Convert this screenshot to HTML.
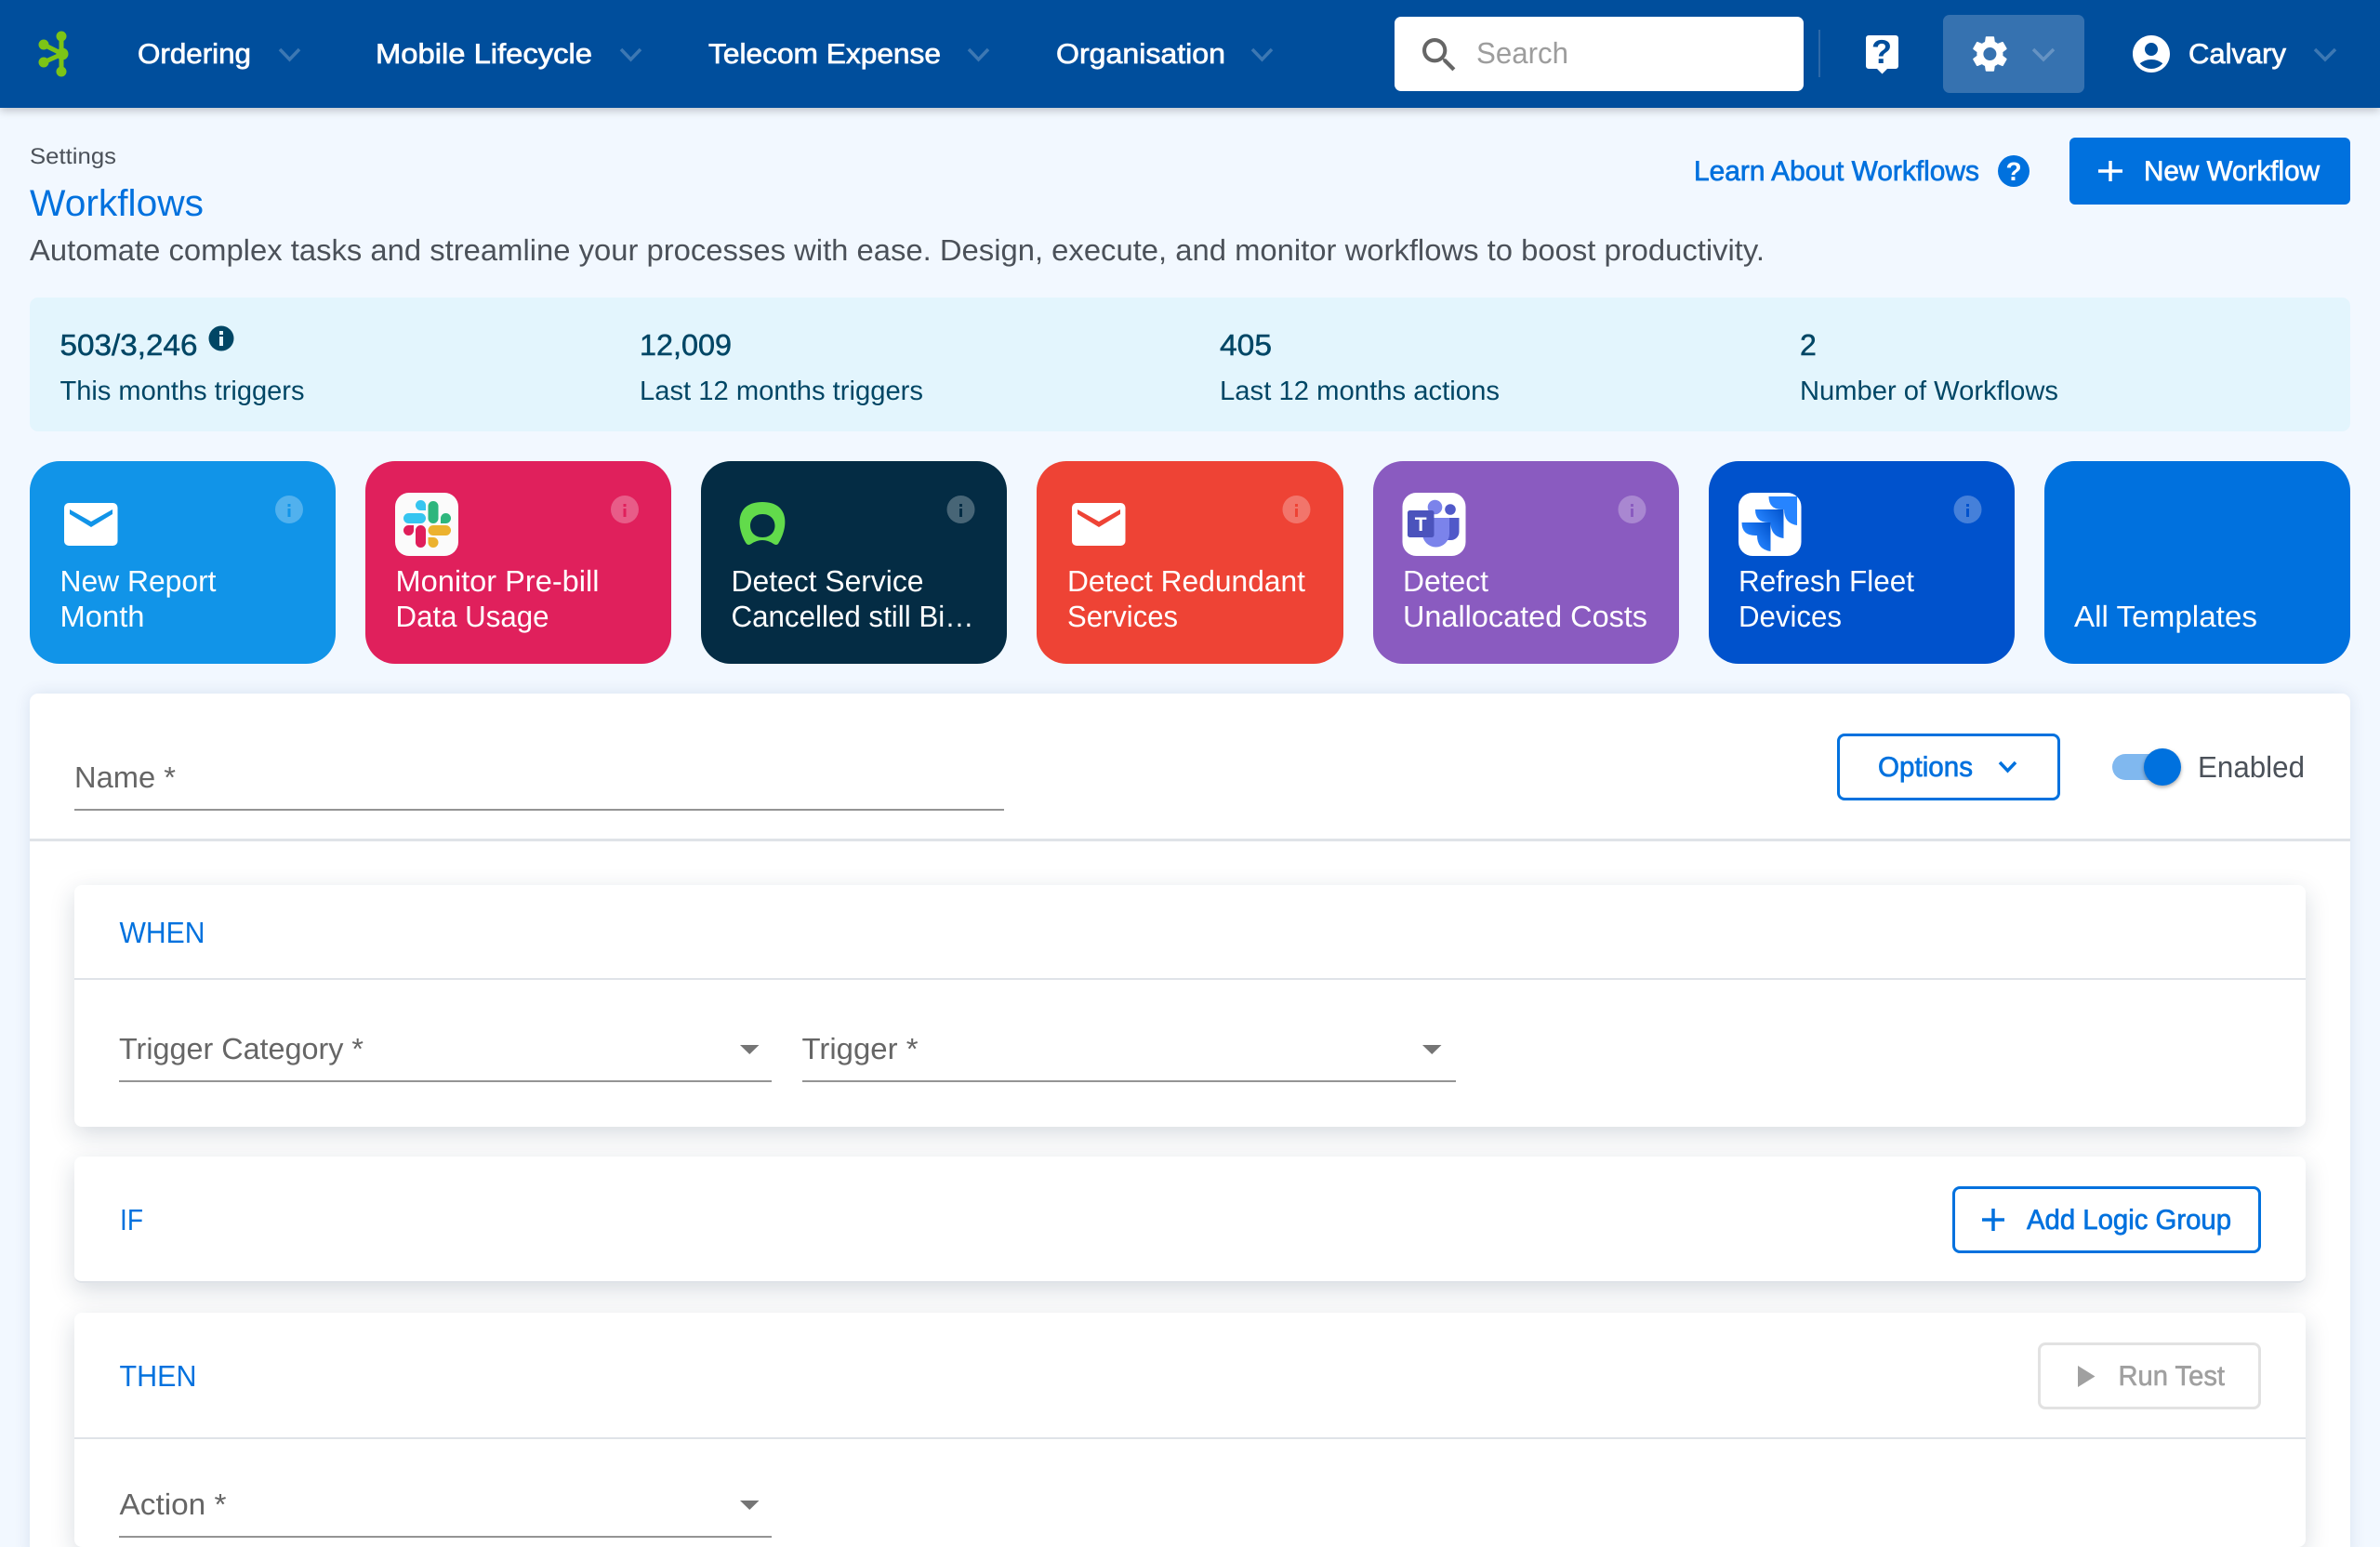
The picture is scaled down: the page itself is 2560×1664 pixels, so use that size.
<!DOCTYPE html>
<html lang="en">
<head>
<meta charset="utf-8">
<title>Workflows</title>
<style>
html,body{margin:0;padding:0;width:2560px;height:1664px;overflow:hidden;background:#f2f8ff;font-family:"Liberation Sans",sans-serif}
#page{position:relative;width:2560px;height:1664px;overflow:hidden}
.b{position:absolute;box-sizing:border-box}
header.b{left:0;top:0;width:2560px;height:116px;background:#004e9c;box-shadow:0 3px 9px rgba(0,0,0,.22)}
.search{left:1500px;top:18px;width:440px;height:80px;background:#fff;border-radius:7px}
.sep{left:1956px;top:32px;width:2px;height:51px;background:#2d69a8}
.gearbox{left:2090px;top:16px;width:152px;height:84px;background:#3672b0;border-radius:7px}
.newbtn{left:2226px;top:148px;width:302px;height:72px;background:#0071de;border-radius:6px}
.stats{left:32px;top:320px;width:2496px;height:144px;background:#e3f5fd;border-radius:9px}
.card{top:496px;width:329.140px;height:218px;border-radius:32px}
.panel{left:32px;top:746px;width:2496px;height:930px;background:#fff;border-radius:9px 9px 0 0;box-shadow:0 0 18px rgba(0,50,120,.11)}
.line{background:#dfe3e8;height:3px}
.ul{background:#949494;height:2px}
.sub{left:80px;width:2400px;background:#fff;border-radius:8px;box-shadow:0 8px 26px rgba(20,40,70,.17)}
.obtn{border:3px solid #0071de;border-radius:8px;background:#fff}
.dbtn{border:3px solid #e2e2e2;border-radius:8px;background:#fff}
.track{left:2272px;top:811px;width:60px;height:28px;background:#80b8ef;border-radius:14px}
.thumb{left:2306px;top:805px;width:40px;height:40px;background:#0071de;border-radius:50%;box-shadow:0 2px 4px rgba(0,0,0,.35)}
svg#o{position:absolute;left:0;top:0;width:2560px;height:1664px;overflow:hidden}
text{font-family:"Liberation Sans",sans-serif;text-rendering:geometricPrecision}
.nav{font-size:30px;fill:#fff;stroke:#fff;stroke-width:.7}
.bl{font-size:30px;fill:#0071de;stroke:#0071de;stroke-width:.7}
.g{fill:#4b5159}
.st{font-size:32px;fill:#004665;stroke:#004665;stroke-width:.5}
.sl{font-size:29px;fill:#004665}
.ct{font-size:32px;fill:#fff}
.sec{font-size:32px;fill:#0071de}
.lab{font-size:32px;fill:#666}
</style>
</head>
<body>
<div id="page">
<header class="b"></header>
<div class="b search"></div>
<div class="b sep"></div>
<div class="b gearbox"></div>
<div class="b newbtn"></div>
<div class="b stats"></div>

<div class="b card" style="left:32px;background:#1194e8"></div>
<div class="b card" style="left:393.140px;background:#e0205c"></div>
<div class="b card" style="left:754.290px;background:#042c44"></div>
<div class="b card" style="left:1115.430px;background:#ee4335"></div>
<div class="b card" style="left:1476.570px;background:#8a5bc0"></div>
<div class="b card" style="left:1837.710px;background:#0052cc"></div>
<div class="b card" style="left:2198.860px;background:#0071de"></div>

<div class="b panel"></div>
<div class="b ul" style="left:80px;top:870px;width:1000px"></div>
<div class="b line" style="left:32px;top:902px;width:2496px"></div>
<div class="b obtn" style="left:1976px;top:789px;width:240px;height:72px"></div>
<div class="b track"></div>
<div class="b thumb"></div>

<div class="b sub" style="top:952px;height:259.500px"></div>
<div class="b line" style="left:80px;top:1052px;width:2400px;height:2px"></div>
<div class="b ul" style="left:128px;top:1162px;width:702px"></div>
<div class="b ul" style="left:862.500px;top:1162px;width:703px"></div>

<div class="b sub" style="top:1244px;height:135.500px;border-bottom:2px solid #dfe3e8"></div>
<div class="b obtn" style="left:2100px;top:1276px;width:332px;height:72px"></div>

<div class="b sub" style="top:1412px;height:252px"></div>
<div class="b line" style="left:80px;top:1546px;width:2400px;height:2px"></div>
<div class="b dbtn" style="left:2192px;top:1444px;width:240px;height:72px"></div>
<div class="b ul" style="left:128px;top:1652px;width:702px"></div>

<svg id="o" xmlns="http://www.w3.org/2000/svg" viewBox="0 0 2560 1664">
<defs>
<linearGradient id="jg" x1="1" y1="0" x2="0.3" y2="0.6"><stop offset="0" stop-color="#0052cc"/><stop offset="1" stop-color="#2684ff"/></linearGradient>
</defs>

<!-- logo -->
<g fill="#7cc416" stroke="#7cc416">
<path d="M66 39V77M67 58L47 48M67 58L47 67" stroke-width="5" fill="none"/>
<circle cx="66" cy="39" r="5" /><circle cx="47" cy="48" r="5"/><circle cx="47" cy="67" r="5"/><circle cx="66" cy="77" r="5"/><circle cx="67" cy="58" r="6"/>
</g>

<!-- nav -->
<g class="nav">
<text x="148" y="68" textLength="122" lengthAdjust="spacingAndGlyphs">Ordering</text>
<text x="404" y="68" textLength="233" lengthAdjust="spacingAndGlyphs">Mobile Lifecycle</text>
<text x="762" y="68" textLength="250" lengthAdjust="spacingAndGlyphs">Telecom Expense</text>
<text x="1136" y="68" textLength="182" lengthAdjust="spacingAndGlyphs">Organisation</text>
<text x="2354" y="68" textLength="105" lengthAdjust="spacingAndGlyphs">Calvary</text>
</g>
<g fill="none" stroke="#fff" stroke-opacity=".24" stroke-width="3.500">
<path d="M301 53L311.500 64L322 53"/>
<path d="M668 53L678.500 64L689 53"/>
<path d="M1042 53L1052.500 64L1063 53"/>
<path d="M1347 53L1357.500 64L1368 53"/>
<path d="M2187 53L2198 64L2209 53"/>
<path d="M2490 53L2501 64L2512 53"/>
</g>

<!-- search -->
<path transform="translate(1524,35) scale(2.020)" fill="#666" d="M15.500 14h-.79l-.28-.27C15.410 12.590 16 11.110 16 9.500 16 5.910 13.090 3 9.500 3S3 5.910 3 9.500 5.910 16 9.500 16c1.610 0 3.090-.59 4.230-1.570l.27.28v.79l5 4.990L20.490 19l-4.990-5zm-6 0C7.010 14 5 11.990 5 9.500S7.010 5 9.500 5 14 7.010 14 9.500 11.990 14 9.500 14z"/>
<text x="1588" y="68" font-size="32" fill="#9d9d9d" textLength="99" lengthAdjust="spacingAndGlyphs">Search</text>

<!-- help bubble -->
<path fill="#fff" d="M2010 38H2039a3 3 0 0 1 3 3V71a3 3 0 0 1-3 3H2030L2024.500 79.500L2019 74H2010a3 3 0 0 1-3-3V41a3 3 0 0 1 3-3z"/>
<text x="2024" y="68" font-size="36" font-weight="bold" fill="#004e9c" text-anchor="middle">?</text>

<!-- gear -->
<path transform="translate(2117,34.600) scale(1.950)" fill="#fff" d="M19.140 12.940c.04-.3.06-.61.06-.94 0-.32-.02-.64-.07-.94l2.030-1.580c.18-.14.23-.41.12-.61l-1.920-3.320c-.12-.22-.37-.29-.59-.22l-2.390.96c-.5-.38-1.030-.7-1.620-.94l-.36-2.540c-.04-.24-.24-.41-.48-.41h-3.840c-.24 0-.43.17-.47.41l-.36 2.540c-.59.24-1.130.57-1.620.94l-2.390-.96c-.22-.08-.47 0-.59.22L2.740 8.870c-.12.21-.08.47.12.61l2.030 1.580c-.05.3-.09.63-.09.94s.02.64.07.94l-2.030 1.580c-.18.14-.23.41-.12.61l1.920 3.320c.12.22.37.29.59.22l2.390-.96c.5.38 1.030.7 1.620.94l.36 2.540c.05.24.24.41.48.41h3.840c.24 0 .44-.17.47-.41l.36-2.540c.59-.24 1.130-.56 1.620-.94l2.390.96c.22.08.47 0 .59-.22l1.920-3.320c.12-.22.07-.47-.12-.61l-2.010-1.580zM12 15.600c-1.980 0-3.600-1.620-3.600-3.600s1.620-3.600 3.600-3.600 3.600 1.620 3.600 3.600-1.620 3.600-3.600 3.600z"/>

<!-- account -->
<path transform="translate(2290,34) scale(2)" fill="#fff" d="M12 2C6.480 2 2 6.480 2 12s4.480 10 10 10 10-4.480 10-10S17.520 2 12 2zm0 4c1.930 0 3.500 1.570 3.500 3.500S13.930 13 12 13s-3.500-1.570-3.500-3.500S10.070 6 12 6zm0 14c-2.030 0-4.430-.82-6.140-2.880C7.550 15.800 9.680 15 12 15s4.450.8 6.140 2.120C16.430 19.180 14.030 20 12 20z"/>

<!-- page head -->
<text x="32" y="176" font-size="24" class="g" textLength="93" lengthAdjust="spacingAndGlyphs">Settings</text>
<text x="32" y="232" font-size="40" fill="#0071de" textLength="187" lengthAdjust="spacingAndGlyphs">Workflows</text>
<text x="32" y="280" font-size="32" class="g" textLength="1866" lengthAdjust="spacingAndGlyphs">Automate complex tasks and streamline your processes with ease. Design, execute, and monitor workflows to boost productivity.</text>
<text x="1822" y="194" class="bl" textLength="307" lengthAdjust="spacingAndGlyphs">Learn About Workflows</text>
<circle cx="2166" cy="184" r="17" fill="#0071de"/>
<text x="2166" y="194" font-size="28" font-weight="bold" fill="#fff" text-anchor="middle">?</text>
<path d="M2270 173V195M2257 184H2283" stroke="#fff" stroke-width="3.500" fill="none"/>
<text x="2306" y="194" class="nav" textLength="189" lengthAdjust="spacingAndGlyphs">New Workflow</text>

<!-- stats -->
<text x="64.500" y="382" class="st" textLength="148" lengthAdjust="spacingAndGlyphs">503/3,246</text>
<circle cx="238" cy="364" r="13.500" fill="#004665"/>
<rect x="236" y="356" width="4" height="4" fill="#e3f5fd"/><rect x="236" y="362" width="4" height="10" fill="#e3f5fd"/>
<text x="64.500" y="430" class="sl" textLength="263" lengthAdjust="spacingAndGlyphs">This months triggers</text>
<text x="688" y="382" class="st" textLength="99" lengthAdjust="spacingAndGlyphs">12,009</text>
<text x="688" y="430" class="sl" textLength="305" lengthAdjust="spacingAndGlyphs">Last 12 months triggers</text>
<text x="1312" y="382" class="st" textLength="56" lengthAdjust="spacingAndGlyphs">405</text>
<text x="1312" y="430" class="sl" textLength="301" lengthAdjust="spacingAndGlyphs">Last 12 months actions</text>
<text x="1936" y="382" class="st">2</text>
<text x="1936" y="430" class="sl" textLength="278" lengthAdjust="spacingAndGlyphs">Number of Workflows</text>

<!-- card text -->
<g class="ct">
<text x="64.500" y="636" textLength="168" lengthAdjust="spacingAndGlyphs">New Report</text>
<text x="64.500" y="674" textLength="91" lengthAdjust="spacingAndGlyphs">Month</text>
<text x="425.500" y="636" textLength="219" lengthAdjust="spacingAndGlyphs">Monitor Pre-bill</text>
<text x="425.500" y="674" textLength="165" lengthAdjust="spacingAndGlyphs">Data Usage</text>
<text x="786.500" y="636" textLength="207" lengthAdjust="spacingAndGlyphs">Detect Service</text>
<text x="786.500" y="674" textLength="261" lengthAdjust="spacingAndGlyphs">Cancelled still Bi…</text>
<text x="1148" y="636" textLength="256" lengthAdjust="spacingAndGlyphs">Detect Redundant</text>
<text x="1148" y="674" textLength="119" lengthAdjust="spacingAndGlyphs">Services</text>
<text x="1509" y="636" textLength="92" lengthAdjust="spacingAndGlyphs">Detect</text>
<text x="1509" y="674" textLength="263" lengthAdjust="spacingAndGlyphs">Unallocated Costs</text>
<text x="1870" y="636" textLength="189" lengthAdjust="spacingAndGlyphs">Refresh Fleet</text>
<text x="1870" y="674" textLength="111" lengthAdjust="spacingAndGlyphs">Devices</text>
<text x="2231" y="674" textLength="197" lengthAdjust="spacingAndGlyphs">All Templates</text>
</g>

<!-- info icons -->
<g fill="#fff" fill-opacity=".27">
<circle cx="311" cy="548" r="15"/><circle cx="672" cy="548" r="15"/><circle cx="1033.500" cy="548" r="15"/><circle cx="1394.500" cy="548" r="15"/><circle cx="1755.500" cy="548" r="15"/><circle cx="2116.500" cy="548" r="15"/>
</g>
<g>
<path fill="#1194e8" d="M309.500 542h3v3h-3zM309.500 547h3v9h-3z"/>
<path fill="#e0205c" d="M670.500 542h3v3h-3zM670.500 547h3v9h-3z"/>
<path fill="#042c44" d="M1032 542h3v3h-3zM1032 547h3v9h-3z"/>
<path fill="#ee4335" d="M1393 542h3v3h-3zM1393 547h3v9h-3z"/>
<path fill="#8a5bc0" d="M1754 542h3v3h-3zM1754 547h3v9h-3z"/>
<path fill="#0052cc" d="M2115 542h3v3h-3zM2115 547h3v9h-3z"/>
</g>

<!-- mail icons -->
<rect x="69" y="541" width="57.500" height="46" rx="5" fill="#fff"/>
<polygon points="75,548 98,561 121,548 121,553 98,567 75,553" fill="#1194e8"/>
<rect x="1153" y="541" width="57.500" height="46" rx="5" fill="#fff"/>
<polygon points="1159,548 1182,561 1205,548 1205,553 1182,567 1159,553" fill="#ee4335"/>

<!-- slack -->
<rect x="425" y="530" width="68" height="68" rx="15" fill="#fbfbfb"/>
<g>
<rect x="447" y="538" width="11" height="11" rx="5.500" fill="#36c5f0"/><rect x="452" y="543" width="6" height="6" fill="#36c5f0"/>
<rect x="434" y="552" width="24" height="11" rx="5.500" fill="#36c5f0"/>
<rect x="460.500" y="539" width="11" height="24" rx="5.500" fill="#2eb67d"/>
<rect x="474" y="552" width="11" height="11" rx="5.500" fill="#2eb67d"/><rect x="474" y="557" width="6" height="6" fill="#2eb67d"/>
<rect x="434" y="565" width="11" height="11" rx="5.500" fill="#e01e5a"/><rect x="439" y="565" width="6" height="6" fill="#e01e5a"/>
<rect x="447" y="565" width="11" height="24" rx="5.500" fill="#e01e5a"/>
<rect x="460.500" y="565" width="24.500" height="11" rx="5.500" fill="#ecb22e"/>
<rect x="460.500" y="578" width="11" height="11" rx="5.500" fill="#ecb22e"/><rect x="460.500" y="578" width="6" height="6" fill="#ecb22e"/>
</g>

<!-- detect logo -->
<path fill="#62db4b" fill-rule="evenodd" d="M803 585C792 568 790 540 820 540C850 540 848 568 837 585Q835 587 832 585Q826 581 820 581Q814 581 808 585Q805 587 803 585ZM820.300 553C812 553 807 558.500 807 565.500C807 572.500 812 578 820.300 578C828.500 578 833.500 572.500 833.500 565.500C833.500 558.500 828.500 553 820.300 553Z"/>

<!-- teams -->
<rect x="1508.500" y="530" width="68" height="68" rx="15" fill="#fff"/>
<circle cx="1560" cy="548" r="5.800" fill="#5059c9"/>
<path d="M1552 557H1569.500V572a9 9 0 0 1-9 9H1552z" fill="#5059c9"/>
<circle cx="1543.500" cy="545.500" r="7.800" fill="#7b83eb"/>
<path d="M1530 557H1559V574a14.500 14.500 0 0 1-29 0z" fill="#7b83eb"/>
<rect x="1514" y="549" width="28.500" height="29" rx="2.500" fill="#4b53bc"/>
<text x="1528.200" y="571" font-size="21" font-weight="bold" fill="#fff" text-anchor="middle">T</text>

<!-- jira -->
<rect x="1870" y="530" width="67.500" height="68" rx="15" fill="#fff"/>
<path fill="#2684ff" d="M1902.500 534H1933V565Q1919 563 1919 548H1917Q1902.500 548 1902.500 534Z"/>
<path fill="url(#jg)" d="M1888 548H1918.500V579Q1904.500 577 1904.500 562H1902Q1888 562 1888 548Z"/>
<path fill="url(#jg)" d="M1873.500 562H1904.500V593Q1890 591 1890 576H1888Q1873.500 576 1873.500 562Z"/>

<!-- form -->
<text x="80" y="847" class="lab" textLength="109" lengthAdjust="spacingAndGlyphs">Name *</text>
<text x="2020" y="835" class="bl" textLength="102" lengthAdjust="spacingAndGlyphs">Options</text>
<path d="M2151 820L2159.500 829L2168 820" fill="none" stroke="#0071de" stroke-width="3.500"/>
<text x="2364" y="836" font-size="32" class="g" textLength="115" lengthAdjust="spacingAndGlyphs">Enabled</text>

<text x="128.500" y="1014" class="sec" textLength="92" lengthAdjust="spacingAndGlyphs">WHEN</text>
<text x="128" y="1139" class="lab" textLength="263" lengthAdjust="spacingAndGlyphs">Trigger Category *</text>
<polygon points="796,1124 816.500,1124 806.250,1134" fill="#757575"/>
<text x="862.500" y="1139" class="lab" textLength="125" lengthAdjust="spacingAndGlyphs">Trigger *</text>
<polygon points="1530,1124 1550.500,1124 1540.250,1134" fill="#757575"/>

<text x="129" y="1323" class="sec" textLength="25" lengthAdjust="spacingAndGlyphs">IF</text>
<path d="M2144 1300V1324M2132 1312H2156" stroke="#0071de" stroke-width="3.500" fill="none"/>
<text x="2180" y="1322" class="bl" textLength="220" lengthAdjust="spacingAndGlyphs">Add Logic Group</text>

<text x="128.500" y="1491" class="sec" textLength="83" lengthAdjust="spacingAndGlyphs">THEN</text>
<polygon points="2235,1469 2253.500,1480.500 2235,1492" fill="#a0a0a0"/>
<text x="2278.500" y="1490" font-size="30" fill="#a0a0a0" stroke="#a0a0a0" stroke-width=".6" textLength="114.500" lengthAdjust="spacingAndGlyphs">Run Test</text>

<text x="128.500" y="1629" class="lab" textLength="115" lengthAdjust="spacingAndGlyphs">Action *</text>
<polygon points="796,1614 816.500,1614 806.250,1624" fill="#757575"/>
</svg>
</div>
</body>
</html>
